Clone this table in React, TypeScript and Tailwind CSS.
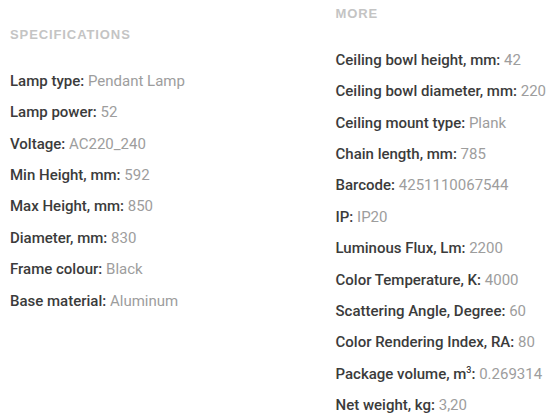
const specs: [string, string][] = [
  ['Lamp type', 'Pendant Lamp'],
  ['Lamp power', '52'],
  ['Voltage', 'AC220_240'],
  ['Min Height, mm', '592'],
  ['Max Height, mm', '850'],
  ['Diameter, mm', '830'],
  ['Frame colour', 'Black'],
  ['Base material', 'Aluminum'],
];

const more: [React.ReactNode, string][] = [
  ['Ceiling bowl height, mm', '42'],
  ['Ceiling bowl diameter, mm', '220'],
  ['Ceiling mount type', 'Plank'],
  ['Chain length, mm', '785'],
  ['Barcode', '4251110067544'],
  ['IP', 'IP20'],
  ['Luminous Flux, Lm', '2200'],
  ['Color Temperature, K', '4000'],
  ['Scattering Angle, Degree', '60'],
  ['Color Rendering Index, RA', '80'],
  [
    <>
      Package volume, m<sup className="text-[9px] relative -top-[6px]">3</sup>
    </>,
    '0.269314',
  ],
  ['Net weight, kg', '3,20'],
];

const Row = ({ label, value }: { label: React.ReactNode; value: string }) => (
  <div className="h-[31.36px] leading-[31.36px] whitespace-nowrap">
    <span className="font-medium text-[#3b3b3b]">{label}:</span>{' '}
    <span className="text-[#9d9d9d]">{value}</span>
  </div>
);

const Heading = ({ children }: { children: React.ReactNode }) => (
  <h3 className="h-5 leading-5 font-['Liberation_Sans',Arial,sans-serif] text-[13px] font-bold tracking-[0.9px] text-[#c4c4c4] mb-[21px]">
    {children}
  </h3>
);

export default function App() {
  return (
    <div className="w-[546px] h-[414px] bg-white overflow-hidden flex font-['Roboto',Arial,sans-serif] text-[15px]">
      <div className="w-[336px] pl-[10px] pt-[25px]">
        <Heading>SPECIFICATIONS</Heading>
        {specs.map(([l, v]) => (
          <Row key={l} label={l} value={v} />
        ))}
      </div>
      <div className="flex-1 pt-[4px]">
        <Heading>MORE</Heading>
        {more.map(([l, v], i) => (
          <Row key={i} label={l} value={v} />
        ))}
      </div>
    </div>
  );
}
